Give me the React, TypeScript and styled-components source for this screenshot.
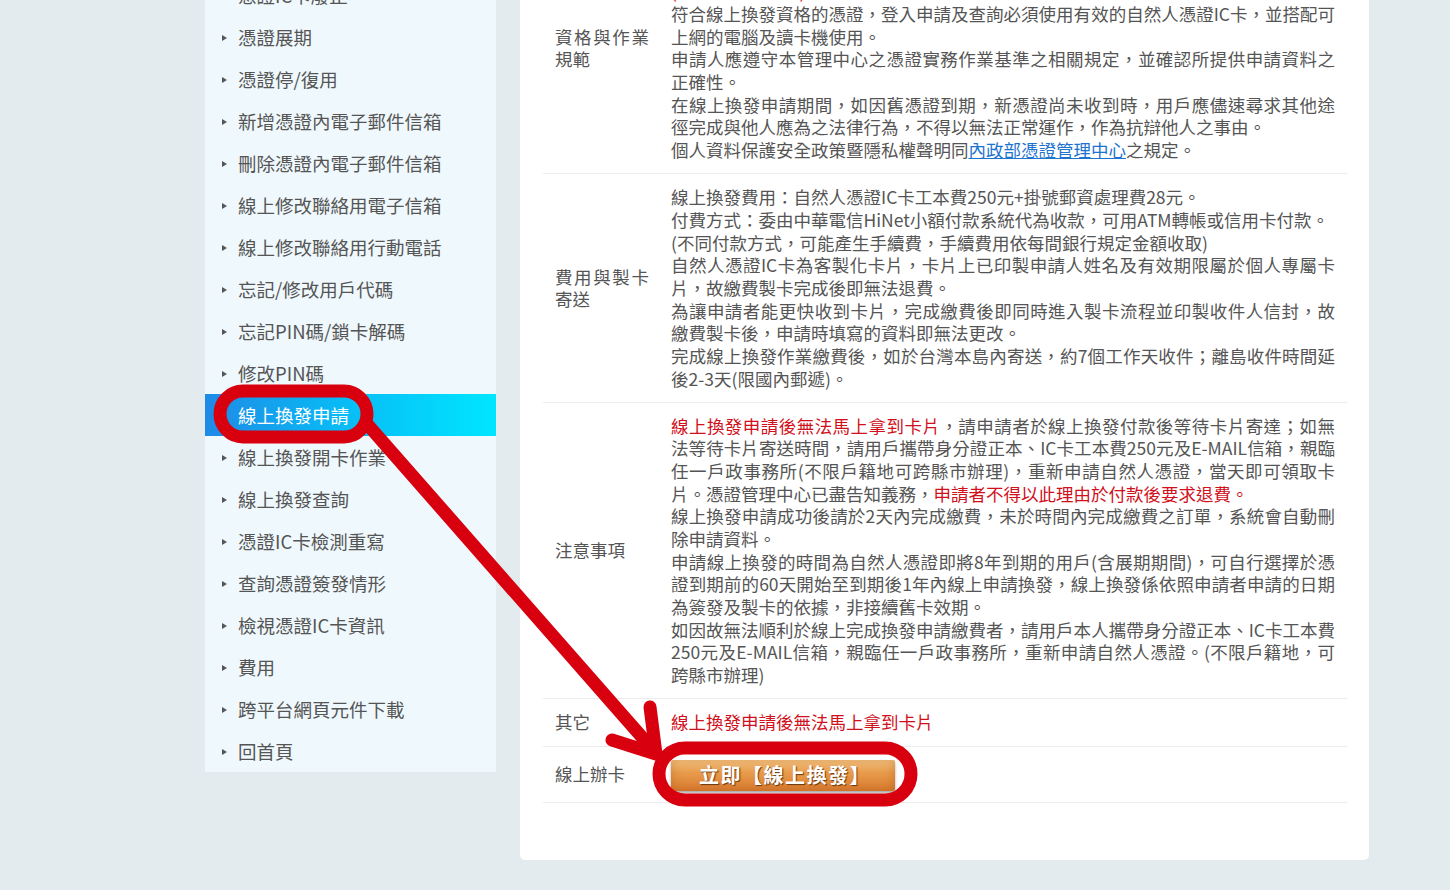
import React from "react";
import styled, { createGlobalStyle } from "styled-components";

const GlobalStyle = createGlobalStyle`
  html, body {
    margin: 0;
    padding: 0;
    background: #e4ebee;
    font-family: "Noto Sans CJK TC", "Noto Sans", sans-serif;
    overflow: hidden;
  }
`;

const menu = [
  "憑證IC卡申請",
  "憑證IC卡註銷",
  "憑證IC卡廢止",
  "憑證展期",
  "憑證停/復用",
  "新增憑證內電子郵件信箱",
  "刪除憑證內電子郵件信箱",
  "線上修改聯絡用電子信箱",
  "線上修改聯絡用行動電話",
  "忘記/修改用戶代碼",
  "忘記PIN碼/鎖卡解碼",
  "修改PIN碼",
  "線上換發申請",
  "線上換發開卡作業",
  "線上換發查詢",
  "憑證IC卡檢測重寫",
  "查詢憑證簽發情形",
  "檢視憑證IC卡資訊",
  "費用",
  "跨平台網頁元件下載",
  "回首頁",
];

const ACTIVE = "線上換發申請";

export default function App() {
  return (
    <Page>
      <GlobalStyle />
      <Layout>
        <SideNav>
          {menu.map((item) => (
            <NavItem key={item} $active={item === ACTIVE}>
              {item}
            </NavItem>
          ))}
        </SideNav>

        <Card>
          <InfoTable>
            <Row>
              <Label>資格與作業規範</Label>
              <Content>
                <p>
                  申請人須為自然人憑證之本人，且持有之自然人憑證IC卡狀態正常，並於憑證效期屆滿前60天起至屆滿後1年內
                </p>
                <p>
                  <Warn>(限本人申請辦理)</Warn>
                </p>
                <p>
                  符合線上換發資格的憑證，登入申請及查詢必須使用有效的自然人憑證IC卡，並搭配可上網的電腦及讀卡機使用。
                </p>
                <p>
                  申請人應遵守本管理中心之憑證實務作業基準之相關規定，並確認所提供申請資料之正確性。
                </p>
                <p>
                  在線上換發申請期間，如因舊憑證到期，新憑證尚未收到時，用戶應儘速尋求其他途徑完成與他人應為之法律行為，不得以無法正常運作，作為抗辯他人之事由。
                </p>
                <p>
                  個人資料保護安全政策暨隱私權聲明同
                  <TextLink href="#">內政部憑證管理中心</TextLink>之規定。
                </p>
              </Content>
            </Row>

            <Row>
              <Label>費用與製卡寄送</Label>
              <Content>
                <p>線上換發費用：自然人憑證IC卡工本費250元+掛號郵資處理費28元。</p>
                <p>
                  付費方式：委由中華電信HiNet小額付款系統代為收款，可用ATM轉帳或信用卡付款。
                </p>
                <p>(不同付款方式，可能產生手續費，手續費用依每間銀行規定金額收取)</p>
                <p>
                  自然人憑證IC卡為客製化卡片，卡片上已印製申請人姓名及有效期限屬於個人專屬卡片，故繳費製卡完成後即無法退費。
                </p>
                <p>
                  為讓申請者能更快收到卡片，完成繳費後即同時進入製卡流程並印製收件人信封，故繳費製卡後，申請時填寫的資料即無法更改。
                </p>
                <p>
                  完成線上換發作業繳費後，如於台灣本島內寄送，約7個工作天收件；離島收件時間延後2-3天(限國內郵遞)。
                </p>
              </Content>
            </Row>

            <Row>
              <Label>注意事項</Label>
              <Content>
                <p>
                  <Warn>線上換發申請後無法馬上拿到卡片</Warn>
                  ，請申請者於線上換發付款後等待卡片寄達；如無法等待卡片寄送時間，請用戶攜帶身分證正本、IC卡工本費250元及E-MAIL信箱，親臨任一戶政事務所(不限戶籍地可跨縣市辦理)，重新申請自然人憑證，當天即可領取卡片。憑證管理中心已盡告知義務，
                  <Warn>申請者不得以此理由於付款後要求退費。</Warn>
                </p>
                <p>
                  線上換發申請成功後請於2天內完成繳費，未於時間內完成繳費之訂單，系統會自動刪除申請資料。
                </p>
                <p>
                  申請線上換發的時間為自然人憑證即將8年到期的用戶(含展期期間)，可自行選擇於憑證到期前的60天開始至到期後1年內線上申請換發，線上換發係依照申請者申請的日期為簽發及製卡的依據，非接續舊卡效期。
                </p>
                <p>
                  如因故無法順利於線上完成換發申請繳費者，請用戶本人攜帶身分證正本、IC卡工本費250元及E-MAIL信箱，親臨任一戶政事務所，重新申請自然人憑證。(不限戶籍地，可跨縣市辦理)
                </p>
              </Content>
            </Row>

            <Row>
              <Label>其它</Label>
              <Content>
                <p>
                  <Warn>線上換發申請後無法馬上拿到卡片</Warn>
                </p>
              </Content>
            </Row>

            <Row>
              <Label>線上辦卡</Label>
              <Content>
                <ApplyButton type="button">立即【線上換發】</ApplyButton>
              </Content>
            </Row>
          </InfoTable>
        </Card>
      </Layout>

      {/* red hand-drawn markup lying over the page */}
      <Markup viewBox="0 0 1450 890" width="1450" height="890">
        <g
          fill="none"
          stroke="#d8000f"
          strokeWidth="13"
          strokeLinecap="round"
          strokeLinejoin="round"
        >
          <rect x="220" y="391" width="147" height="46" rx="23" />
          <line x1="368" y1="425" x2="655" y2="752" />
          <polyline points="650,707 656,754 612,740" />
          <rect x="659" y="748" width="252" height="52" rx="26" />
        </g>
      </Markup>
    </Page>
  );
}

const Page = styled.div`
  position: relative;
  width: 1450px;
  height: 890px;
  overflow: hidden;
`;

const Layout = styled.div`
  display: flex;
  align-items: flex-start;
  gap: 24px;
  margin: -110px 0 0 205px;
`;

const SideNav = styled.nav`
  width: 291px;
  background: #eff8fc;
  display: flex;
  flex-direction: column;
`;

const NavItem = styled.div<{ $active?: boolean }>`
  position: relative;
  height: 42px;
  display: flex;
  align-items: center;
  padding-left: 33px;
  font-size: 18.5px;
  color: ${(p) => (p.$active ? "#ffffff" : "#555555")};
  background: ${(p) =>
    p.$active
      ? "linear-gradient(90deg, #1f8ae6 0%, #09b9f5 45%, #00e6ff 100%)"
      : "transparent"};

  &::before {
    content: "";
    position: absolute;
    left: 17px;
    top: 19px;
    border-left: 5px solid #555;
    border-top: 3px solid transparent;
    border-bottom: 3px solid transparent;
    display: ${(p) => (p.$active ? "none" : "block")};
  }
`;

const Card = styled.section`
  width: 849px;
  box-sizing: border-box;
  background: #ffffff;
  border-radius: 0 0 5px 5px;
  padding: 33px 22px 57px 23px;
`;

const InfoTable = styled.div`
  display: flex;
  flex-direction: column;
`;

const Row = styled.div`
  display: grid;
  grid-template-columns: 94px 664px;
  column-gap: 22px;
  align-items: center;
  padding: 12px 12px 11.5px;
  border-bottom: 1px solid #ececec;
`;

const Label = styled.div`
  font-size: 17.5px;
  line-height: 22.67px;
  color: #555555;
  text-align: justify;
`;

const Content = styled.div`
  font-size: 17.5px;
  line-height: 22.67px;
  color: #555555;
  text-align: justify;

  p {
    margin: 0;
  }
`;

const Warn = styled.span`
  color: #d0101b;
`;

const TextLink = styled.a`
  color: #1d74cf;
  text-decoration: underline;
`;

const ApplyButton = styled.button`
  display: block;
  width: 224px;
  height: 31px;
  margin-top: 1px;
  border: none;
  border-radius: 2px;
  background: linear-gradient(180deg, #f6c987 0%, #e89c4c 40%, #d97b30 100%);
  box-shadow: 0 2px 3px rgba(0, 0, 0, 0.35), inset 0 0 12px rgba(170, 80, 15, 0.4);
  color: #ffffff;
  font-family: "Noto Sans CJK TC", "Noto Sans", sans-serif;
  font-size: 20px;
  font-weight: 700;
  line-height: 30px;
  letter-spacing: 1.5px;
  padding: 0 0 0 4px;
  text-shadow: 1px 1px 1px rgba(80, 40, 10, 0.85);
  cursor: pointer;
`;

const Markup = styled.svg`
  position: absolute;
  top: 0;
  left: 0;
  pointer-events: none;
`;
